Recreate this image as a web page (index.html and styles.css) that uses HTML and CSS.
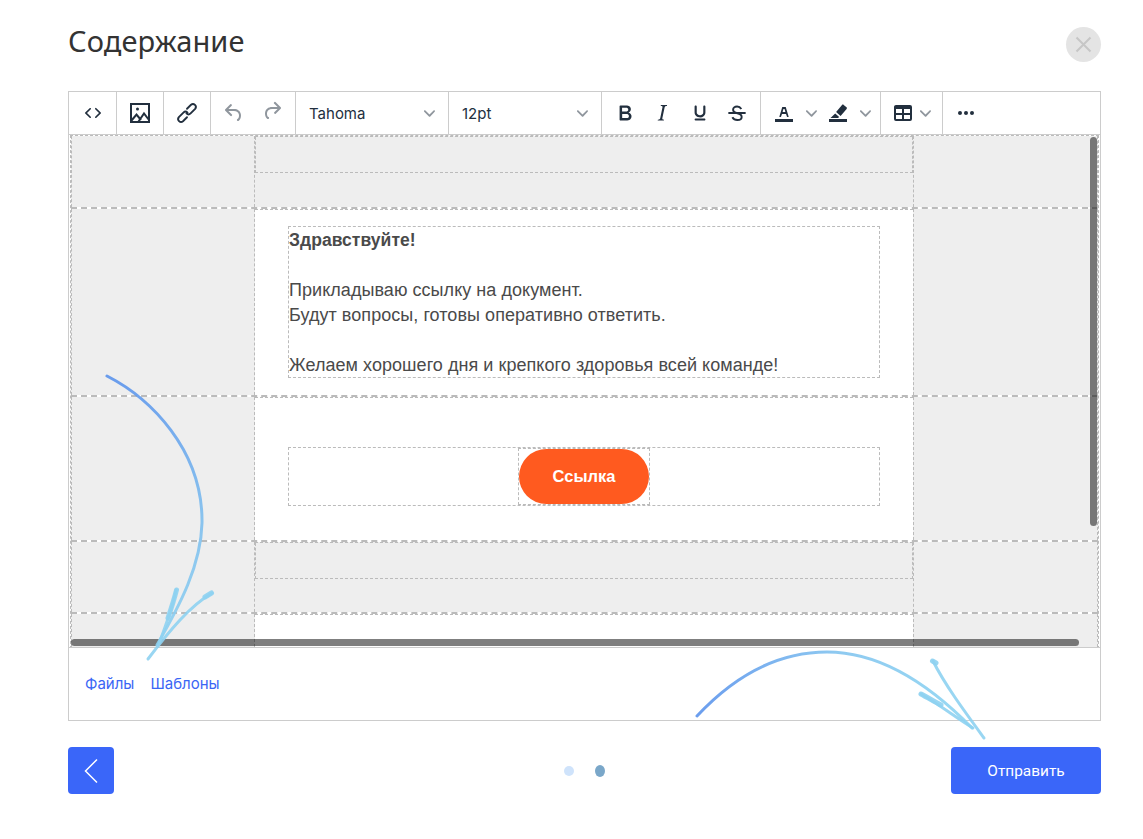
FILE: index.html
```html
<!DOCTYPE html>
<html lang="ru">
<head>
    <meta charset="UTF-8">
    <meta name="viewport" content="width=device-width, initial-scale=1.0">
    <title>Содержание</title>
    <link rel="stylesheet" href="styles.css">
</head>
<body>
    <svg class="defs" width="0" height="0">
        <symbol id="chev" viewBox="0 0 10 10"><path d="M8.7 2.2c.3-.3.8-.3 1 0 .4.4.4.9 0 1.2L5.7 7.8c-.3.3-.9.3-1.2 0L.2 3.4a.8.8 0 0 1 0-1.2c.3-.3.8-.3 1.1 0L5 6l3.7-3.8z"/></symbol>
    </svg>
    <div class="modal">
        <header class="modal-head">
            <h1 class="modal-title">Содержание</h1>
            <button class="close-btn">
                <svg width="17" height="17" viewBox="0 0 17 17"><path d="M1.5 1.5l14 14M15.500 1.500l-14 14"/></svg>
            </button>
        </header>

        <div class="editor">
            <div class="toolbar">
                <div class="tb-group tb-first">
                    <span class="tb-btn"><svg class="ico" viewBox="0 0 24 24"><path d="M9.8 15.700c.3.3.3.8 0 1-.3.4-.9.4-1.200 0l-4.400-4.100a.8.8 0 0 1 0-1.200l4.400-4.200c.3-.3.9-.3 1.200 0 .3.3.3.8 0 1.100L6 12l3.800 3.700zm4.400 0c-.3.3-.3.8 0 1 .3.4.9.4 1.200 0l4.400-4.100c.3-.3.3-.9 0-1.200l-4.400-4.200a.8.8 0 0 0-1.200 0c-.3.3-.3.8 0 1.100L18 12l-3.800 3.700z"/></svg></span>
                </div>
                <div class="tb-group">
                    <span class="tb-btn"><svg class="ico ico-line" viewBox="0 0 24 24"><rect x="3" y="3" width="18" height="18"/><circle cx="9.500" cy="8" r="1.500" class="solid"/><path d="M3.500 19.500l5-6 4.500 5.500M10.500 20.500l5.500-8 5 6.500"/></svg></span>
                </div>
                <div class="tb-group">
                    <span class="tb-btn"><svg class="ico ico-link" viewBox="3 3 18 18"><path d="M12 8.800l3-3a2.200 2.200 0 0 1 3.100 3.100l-3.400 3.400a2.200 2.200 0 0 1-3.100 0M12 15.200l-3 3a2.200 2.200 0 0 1-3.100-3.100l3.400-3.400a2.200 2.200 0 0 1 3.100 0"/></svg></span>
                </div>
                <div class="tb-group">
                    <span class="tb-btn is-off"><svg class="ico" viewBox="0 0 24 24"><path d="M6.400 8H12c3.700 0 6.200 2 6.800 5.100.6 2.700-.4 5.600-2.300 6.800a1 1 0 0 1-1-1.800c1.100-.6 1.800-2.700 1.400-4.600-.5-2.100-2.100-3.500-4.900-3.500H6.400l3.300 3.300a1 1 0 1 1-1.400 1.400l-5-5a1 1 0 0 1 0-1.400l5-5a1 1 0 0 1 1.400 1.400L6.400 8z"/></svg></span>
                    <span class="tb-btn is-off"><svg class="ico" viewBox="0 0 24 24"><path d="M17.600 10H12c-2.800 0-4.400 1.400-4.900 3.500-.4 2 .3 4 1.400 4.600a1 1 0 1 1-1 1.800c-2-1.200-2.900-4.100-2.300-6.800.6-3 3-5.100 6.800-5.100h5.600l-3.300-3.300a1 1 0 1 1 1.400-1.400l5 5a1 1 0 0 1 0 1.400l-5 5a1 1 0 0 1-1.400-1.400l3.300-3.300z" transform="translate(0 -2)"/></svg></span>
                </div>
                <div class="tb-select">
                    <span>Tahoma</span>
                    <svg class="chev"><use href="#chev"/></svg>
                </div>
                <div class="tb-select">
                    <span>12pt</span>
                    <svg class="chev"><use href="#chev"/></svg>
                </div>
                <div class="tb-group tb-format">
                    <span class="tb-btn"><svg class="ico ico-big" viewBox="0 0 24 24"><path d="M7.800 19c-.3 0-.5 0-.6-.2l-.2-.5V5.700c0-.2 0-.4.2-.5l.6-.2h5c1.500 0 2.700.3 3.500 1 .7.6 1.100 1.400 1.100 2.500a3 3 0 0 1-.6 1.900c-.4.6-1 1-1.600 1.200.4.1.9.3 1.300.6s.8.7 1 1.200c.4.4.5 1 .5 1.600 0 1.300-.4 2.300-1.300 3-.8.7-2.100 1-3.800 1H7.800zm5-8.300c.6 0 1.200-.1 1.600-.5.4-.3.6-.7.6-1.300 0-1.100-.8-1.700-2.300-1.700H9.300v3.500h3.500zm.5 6c.7 0 1.300-.1 1.700-.4.400-.4.600-.9.600-1.500s-.2-1-.7-1.400c-.4-.3-1-.4-2-.4H9.400v3.700h3.900z"/></svg></span>
                    <span class="tb-btn"><svg class="ico ico-big" viewBox="0 0 24 24"><path d="M16.700 4.700l-.1.9h-.3c-.6 0-1 0-1.400.3-.3.3-.4.6-.5 1.100l-2.100 9.800v.6c0 .5.400.8 1.400.8h.2l-.2.8H8l.2-.8h.2c1.100 0 1.800-.5 2-1.500l2-9.800.1-.5c0-.6-.4-.8-1.400-.8h-.3l.2-.9h5.800z"/></svg></span>
                    <span class="tb-btn"><svg class="ico ico-big" viewBox="0 0 24 24"><path d="M16 5c.6 0 1 .4 1 1v5.500a4 4 0 0 1-.4 1.800l-1 1.400a5.300 5.300 0 0 1-5.500 1 5 5 0 0 1-1.600-1c-.5-.4-.8-.9-1.100-1.400a4 4 0 0 1-.4-1.800V6c0-.6.4-1 1-1s1 .4 1 1v5.500c0 .3 0 .6.2 1l.6.7a3.300 3.300 0 0 0 2.200.8 3.400 3.400 0 0 0 2.200-.8c.3-.2.4-.5.6-.8l.2-.9V6c0-.6.4-1 1-1zM8 17h8c.6 0 1 .4 1 1s-.4 1-1 1H8a1 1 0 0 1 0-2z"/></svg></span>
                    <span class="tb-btn"><svg class="ico ico-line ico-thin ico-big" viewBox="0 0 24 24"><path d="M16 8.300C15.200 7 13.900 6 12.100 6 9.800 6 8.400 7.300 8.400 9c0 2 1.800 2.700 3.900 3.200 2.500.6 4 1.500 4 3.400 0 1.800-1.600 2.900-4 2.900-2 0-3.600-.9-4.600-2.500"/><path d="M4 12h16"/></svg></span>
                </div>
                <div class="tb-group tb-color">
                    <span class="tb-btn"><svg class="ico" viewBox="0 0 24 24"><path d="M3 18h18v3H3z"/><path d="M8.700 16h-.8a.5.5 0 0 1-.5-.6l2.700-9c.1-.3.3-.4.5-.4h2.800c.2 0 .4.1.5.4l2.700 9a.5.5 0 0 1-.5.6h-.8a.5.5 0 0 1-.4-.4l-.7-2.200c0-.2-.3-.4-.5-.4h-3.400c-.2 0-.4.2-.5.4l-.7 2.200c0 .2-.2.4-.4.4zm2.600-7.600l-.6 2a.5.5 0 0 0 .5.6h1.600a.5.5 0 0 0 .5-.6l-.6-2c0-.3-.3-.4-.5-.4h-.4c-.2 0-.4.1-.5.4z"/></svg></span>
                    <span class="tb-caret"><svg class="chev"><use href="#chev"/></svg></span>
                    <span class="tb-btn"><svg class="ico" viewBox="0 0 24 24"><path d="M3 18h18v3H3z"/><path d="M17.700 3.900l2.800 2.400c.5.4.5 1.100.1 1.600l-6 7-4.500-3.800 5.900-7c.4-.6 1.200-.6 1.700-.2zM9.200 12.600l4 3.400-1.200 1H4.500z"/></svg></span>
                    <span class="tb-caret"><svg class="chev"><use href="#chev"/></svg></span>
                </div>
                <div class="tb-group tb-table">
                    <svg class="ico" viewBox="0 0 24 24"><path d="M19 4a2 2 0 0 1 2 2v12a2 2 0 0 1-2 2H5a2 2 0 0 1-2-2V6c0-1.100.9-2 2-2h14zM5 14v4h6v-4H5zm14 0h-6v4h6v-4zm0-6h-6v4h6V8zM5 12h6V8H5v4z"/></svg>
                    <svg class="chev"><use href="#chev"/></svg>
                </div>
                <div class="tb-group tb-last">
                    <span class="tb-btn"><svg class="ico" viewBox="0 0 24 24"><path d="M6 10a2 2 0 0 0-2 2c0 1.100.9 2 2 2a2 2 0 0 0 2-2 2 2 0 0 0-2-2zm12 0a2 2 0 0 0-2 2c0 1.100.9 2 2 2a2 2 0 0 0 2-2 2 2 0 0 0-2-2zm-6 0a2 2 0 0 0-2 2c0 1.100.9 2 2 2a2 2 0 0 0 2-2 2 2 0 0 0-2-2z"/></svg></span>
                </div>
            </div>

            <div class="doc">
                <div class="mail-table">
                    <div class="mail-row row-head">
                        <div class="side"></div>
                        <div class="center grey"><div class="band"></div></div>
                        <div class="side side-r"></div>
                    </div>
                    <div class="mail-row row-text">
                        <div class="side"></div>
                        <div class="center">
                            <div class="letter">
                                <p class="letter-hi">Здравствуйте!</p>
                                <p>&nbsp;</p>
                                <p>Прикладываю ссылку на документ.</p>
                                <p>Будут вопросы, готовы оперативно ответить.</p>
                                <p>&nbsp;</p>
                                <p>Желаем хорошего дня и крепкого здоровья всей команде!</p>
                            </div>
                        </div>
                        <div class="side side-r"></div>
                    </div>
                    <div class="mail-row row-link">
                        <div class="side"></div>
                        <div class="center">
                            <div class="link-box">
                                <div class="link-cell"><a class="link-btn">Ссылка</a></div>
                            </div>
                        </div>
                        <div class="side side-r"></div>
                    </div>
                    <div class="mail-row row-foot">
                        <div class="side"></div>
                        <div class="center grey"><div class="band"></div></div>
                        <div class="side side-r"></div>
                    </div>
                    <div class="mail-row row-end">
                        <div class="side"></div>
                        <div class="center"></div>
                        <div class="side side-r"></div>
                    </div>
                </div>
                <div class="scroll-v"></div>
                <div class="scroll-h"></div>
            </div>

            <div class="editor-foot">
                <a class="foot-link">Файлы</a>
                <a class="foot-link">Шаблоны</a>
            </div>
        </div>

        <footer class="modal-foot">
            <button class="back-btn">
                <svg width="16" height="26" viewBox="0 0 16 26"><path d="M14 1.500L2.500 13 14 24.500"/></svg>
            </button>
            <div class="dots"><span class="dot"></span><span class="dot dot-on"></span></div>
            <button class="send-btn">Отправить</button>
        </footer>
    </div>

    <!-- hand drawn arrows on top of the page -->
    <svg class="arrows" width="1143" height="839" viewBox="0 0 1143 839">
        <defs>
            <linearGradient id="grad1" gradientUnits="userSpaceOnUse" x1="107" y1="376" x2="160" y2="650">
                <stop offset="0" stop-color="#5b93ec"/>
                <stop offset=".55" stop-color="#7dbdee"/>
                <stop offset="1" stop-color="#8ed2f1"/>
            </linearGradient>
            <linearGradient id="grad2" gradientUnits="userSpaceOnUse" x1="697" y1="716" x2="975" y2="728">
                <stop offset="0" stop-color="#5b93ec"/>
                <stop offset=".5" stop-color="#82c4ef"/>
                <stop offset="1" stop-color="#8ed6f2"/>
            </linearGradient>
        </defs>
        <path class="arrow" stroke="url(#grad1)" d="M107 376C150 398 203 450 202 523C201 565 180 605 157 645"/>
        <path class="arrow-head" d="M212 593C190 606 170 630 148 659"/>
        <path class="arrow-head" d="M176 590C172 610 166 625 158 646"/>
        <path class="arrow-fat" d="M176.500 590C174 600 171 609 168 618"/>
        <path class="arrow-fat" d="M211.500 593L205 597"/>
        <path class="arrow" stroke="url(#grad2)" d="M697 716C740 670 785 652 827 652C880 652 930 685 972 728"/>
        <path class="arrow-head" d="M933 661C945 685 965 712 984 738"/>
        <path class="arrow-head" d="M921 694C940 705 955 717 973 728"/>
        <path class="arrow-fat" d="M921 694C928 698 934 701 941 705"/>
        <path class="arrow-fat" d="M932.500 661L936 663"/>
    </svg>
</body>
</html>
```

FILE: styles.css
```css
* { box-sizing: border-box; }
html, body { margin: 0; padding: 0; background: #fff; }
body { position: relative; width: 1143px; height: 839px; overflow: hidden; font-family: "Liberation Sans", Arial, sans-serif; }
.defs { position: absolute; }

.modal { padding: 0 42px 0 68px; }
.modal-head { height: 91px; display: flex; justify-content: space-between; padding-top: 26px; }
.modal-title { margin: 0; font-family: "Noto Sans", sans-serif; font-weight: 400; font-size: 29px; line-height: 30px; letter-spacing: .1px; color: #333; }
.close-btn { width: 35px; height: 35px; margin-top: 1px; padding: 0; border: 0; border-radius: 50%; background: #e4e4e4; display: flex; align-items: center; justify-content: center; }
.close-btn path { stroke: #c6c6c6; stroke-width: 2; fill: none; }

.editor { border: 1px solid #ccc; height: 630px; display: flex; flex-direction: column; }

.toolbar { height: 43px; flex: none; display: flex; border-bottom: 1px solid #ccc; color: #222f3e; }
.tb-group { display: flex; align-items: center; padding: 0 4px; border-right: 1px solid #ccc; }
.tb-first { padding-left: 5px; }
.tb-btn { width: 38px; height: 42px; display: flex; align-items: center; justify-content: center; }
.tb-btn.is-off .ico { opacity: .5; }
.ico { width: 24px; height: 24px; fill: #222f3e; display: block; flex: none; }
.ico-big { width: 26px; height: 26px; }
.ico-line { fill: none; stroke: #222f3e; stroke-width: 2; }
.ico-link { fill: none; stroke: #222f3e; stroke-width: 1.400; stroke-linecap: round; }
.ico-thin { stroke-width: 1.800; }
.ico-line .solid { fill: #222f3e; stroke: none; }
.chev { width: 11px; height: 11px; fill: #222f3e; opacity: .5; display: block; flex: none; }

.tb-select { width: 153px; display: flex; align-items: center; justify-content: space-between; padding: 0 13px; border-right: 1px solid #ccc; font-family: Inter, sans-serif; font-size: 15px; }
.tb-format { width: 159px; }
.tb-format .tb-btn { width: 37.500px; }
.tb-color { width: 120px; }
.tb-caret { width: 16px; display: flex; justify-content: center; }
.tb-table { width: 62px; padding-left: 10px; gap: 5px; }
.tb-last { border-right: 0; }

.doc { position: relative; height: 512px; flex: none; padding: 0 1px; overflow: hidden; }
.mail-table { border: 1px dashed #bbb; border-bottom: 0; }
.mail-row { display: grid; grid-template-columns: 184px 1fr 185px; border-bottom: 2px dashed #bbb; }
.row-head { height: 73px; }
.row-text { height: 188px; }
.row-link { height: 145px; }
.row-foot { height: 72px; }
.row-end { height: 60px; }
.side { background: #eee; border-right: 1px dashed #bbb; }
.side:first-child { border-left: 1px dashed #bbb; }
.side-r { border-right: 1px dashed #bbb; border-left: 1px dashed #bbb; }
.grey { background: #eee; }
.center { min-width: 0; border-top: 1px dashed #bbb; }
.band { height: 36px; border: 1px dashed #bbb; border-top: 0; }

.letter { margin: 16px 33px 0; height: 152px; border: 1px dashed #bbb; font-size: 18px; line-height: 25px; letter-spacing: .05px; color: #4a4a4a; padding-top: 1px; overflow: hidden; }
.letter p { margin: 0; height: 25px; white-space: nowrap; }
.letter .letter-hi { font-weight: 700; font-size: 17.500px; }

.row-link .center { padding: 49px 33px 0; }
.link-box { height: 59px; border: 1px dashed #bbb; display: flex; justify-content: center; }
.link-cell { width: 132px; border: 1px dashed #bbb; }
.link-btn { display: block; height: 55px; border-radius: 28px; background: #ff5a1f; color: #fff; font-weight: 700; font-size: 16.500px; line-height: 55px; text-align: center; }

.scroll-v { position: absolute; top: 2px; right: 3px; width: 7px; height: 389px; border-radius: 4px; background: rgba(0, 0, 0, .5); }
.scroll-h { position: absolute; left: 2px; bottom: 1px; width: 1008px; height: 7px; border-radius: 4px; background: rgba(0, 0, 0, .5); }

.editor-foot { flex: 1; display: flex; align-items: center; gap: 16px; padding: 0 0 2px 16px; border-top: 1px solid #ccc; }
.foot-link { font-family: Inter, sans-serif; font-size: 15px; color: #3a66f5; }

.modal-foot { display: grid; grid-template-columns: 1fr auto 1fr; align-items: center; margin-top: 26px; }
.back-btn { width: 46px; height: 47px; padding: 0; border: 0; border-radius: 4px; background: #3a66f9; display: flex; align-items: center; justify-content: center; }
.back-btn path { stroke: #fff; stroke-width: 1.500; fill: none; }
.dots { display: flex; align-items: center; gap: 21px; }
.dot { width: 10px; height: 10px; border-radius: 50%; background: #cfe3fb; }
.dot-on { height: 12px; background: #7aa7c9; }
.send-btn { justify-self: end; width: 150px; height: 47px; padding: 0; border: 0; border-radius: 4px; background: #3a66f9; color: #fff; font-family: Roboto, sans-serif; font-size: 15.400px; }

.arrows { position: absolute; left: 0; top: 0; pointer-events: none; }
.arrow { fill: none; stroke-width: 3; stroke-linecap: round; opacity: .9; }
.arrow-head { fill: none; stroke: #8ed2f1; stroke-width: 3; stroke-linecap: round; opacity: .9; }
.arrow-fat { fill: none; stroke: #8ed2f1; stroke-width: 5; stroke-linecap: round; opacity: .9; }
```
